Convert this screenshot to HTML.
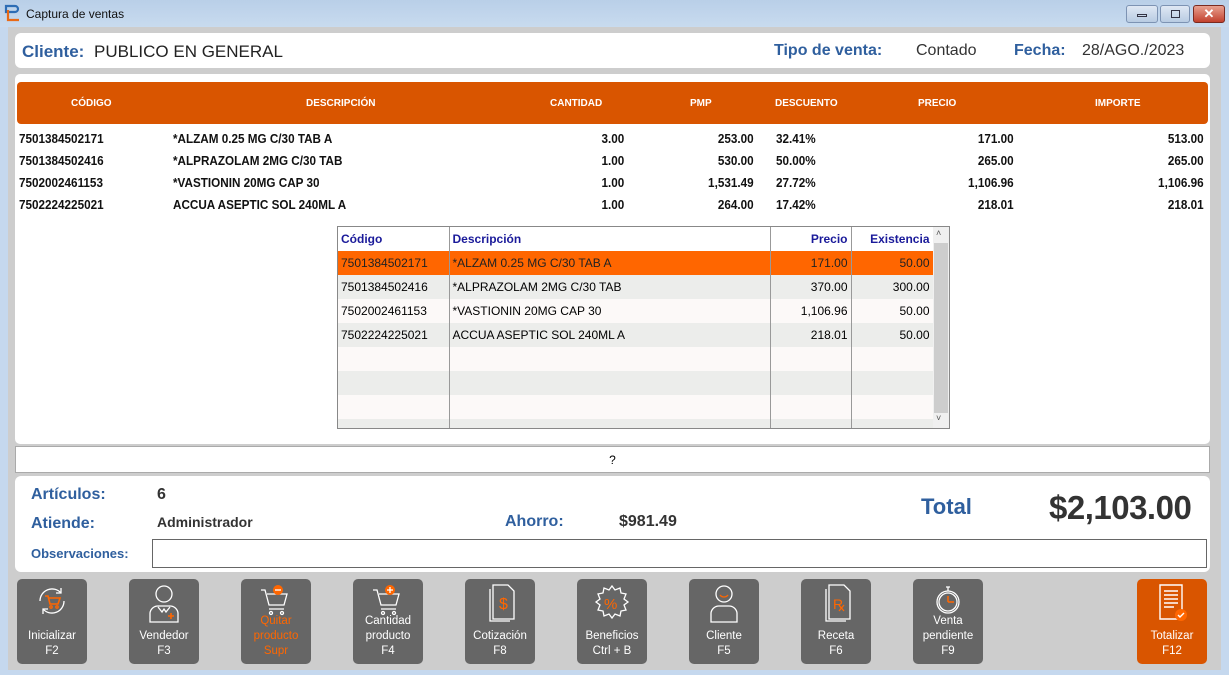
<!DOCTYPE html>
<html><head><meta charset="utf-8"><style>
*{margin:0;padding:0;box-sizing:border-box}
body{width:1229px;height:675px;overflow:hidden;background:#c5d8ee;font-family:"Liberation Sans",sans-serif;position:relative}
.a{position:absolute}
.title{left:0;top:0;width:1229px;height:27px;background:linear-gradient(#b9cfe8,#c8dbef)}
.win{left:8px;top:27px;width:1213px;height:643px;background:#cdcdcd}
.box{background:#fff;border-radius:6px}
.lbl{color:#2f5f9e;font-weight:bold}
.hd{color:#fff;font-weight:bold;font-size:10px;top:98px}
.r{font-weight:bold;font-size:13px;color:#111;transform:scaleX(.9)}
.rt{transform-origin:right}
.lt{transform-origin:left}
.btn{top:579px;width:70px;height:85px;background:#666;border-radius:5px;color:#fff;font-size:11.5px;text-align:center;line-height:15px}
.btn .t{position:absolute;bottom:5px;left:0;width:100%}
.btn svg{position:absolute;left:17px;top:4px}
.pt td{height:24px;font-size:12px;padding:0 3px;border-right:1px solid #999;white-space:nowrap}
</style></head><body>
<div class="a title"></div>
<svg class="a" style="left:4px;top:4px" width="18" height="18" viewBox="0 0 18 18"><path d="M2 2h9a3 3 0 010 6H2z" fill="none" stroke="#2d6db5" stroke-width="2.2"/><path d="M4 6v10h11" fill="none" stroke="#e96a16" stroke-width="2.2"/></svg>
<div class="a" style="left:26px;top:7px;font-size:12px;color:#111">Captura de ventas</div>
<div class="a" style="left:1126px;top:5px;width:32px;height:18px;border:1px solid #7d93b3;border-radius:3px;background:linear-gradient(#dfe8f4,#b8cbe2)"><div class="a" style="left:10px;top:8px;width:10px;height:3px;border:1px solid #334"></div></div>
<div class="a" style="left:1160px;top:5px;width:30px;height:18px;border:1px solid #7d93b3;border-radius:3px;background:linear-gradient(#dfe8f4,#b8cbe2)"><div class="a" style="left:10px;top:4px;width:9px;height:8px;border:1px solid #334"></div></div>
<div class="a" style="left:1193px;top:5px;width:32px;height:18px;border:1px solid #7a2a20;border-radius:3px;background:linear-gradient(#e8a190,#c2412e);color:#fff;font-weight:bold;font-size:13px;text-align:center;line-height:16px">✕</div>
<div class="a win"></div>
<div class="a box" style="left:15px;top:33px;width:1195px;height:35px"></div>
<div class="a lbl" style="left:22px;top:42px;font-size:17px">Cliente:</div>
<div class="a" style="left:94px;top:42px;font-size:17px;color:#222">PUBLICO EN GENERAL</div>
<div class="a lbl" style="left:774px;top:42px;font-size:16px">Tipo de venta:</div>
<div class="a" style="left:916px;top:42px;font-size:16px;color:#333">Contado</div>
<div class="a lbl" style="left:1014px;top:42px;font-size:16px">Fecha:</div>
<div class="a" style="left:1082px;top:42px;font-size:16px;color:#333">28/AGO./2023</div>
<div class="a box" style="left:15px;top:74px;width:1195px;height:370px;border-radius:5px"></div>
<div class="a" style="left:17px;top:82px;width:1191px;height:42px;background:#d95500;border-radius:4px"></div>
<div class="a hd" style="left:71px">CÓDIGO</div>
<div class="a hd" style="left:306px">DESCRIPCIÓN</div>
<div class="a hd" style="left:550px">CANTIDAD</div>
<div class="a hd" style="left:690px">PMP</div>
<div class="a hd" style="left:775px">DESCUENTO</div>
<div class="a hd" style="left:918px">PRECIO</div>
<div class="a hd" style="left:1095px">IMPORTE</div>
<div class="a r lt" style="left:19px;top:128px;line-height:22px">7501384502171<br>7501384502416<br>7502002461153<br>7502224225021</div>
<div class="a r lt" style="left:173px;top:128px;line-height:22px">*ALZAM 0.25 MG C/30 TAB A<br>*ALPRAZOLAM 2MG C/30 TAB<br>*VASTIONIN 20MG CAP 30<br>ACCUA ASEPTIC SOL 240ML A</div>
<div class="a r rt" style="right:605px;top:128px;line-height:22px;text-align:right">3.00<br>1.00<br>1.00<br>1.00</div>
<div class="a r rt" style="right:475px;top:128px;line-height:22px;text-align:right">253.00<br>530.00<br>1,531.49<br>264.00</div>
<div class="a r lt" style="left:776px;top:128px;line-height:22px">32.41%<br>50.00%<br>27.72%<br>17.42%</div>
<div class="a r rt" style="right:215px;top:128px;line-height:22px;text-align:right">171.00<br>265.00<br>1,106.96<br>218.01</div>
<div class="a r rt" style="right:25px;top:128px;line-height:22px;text-align:right">513.00<br>265.00<br>1,106.96<br>218.01</div>
<div class="a" style="left:337px;top:226px;width:613px;height:203px;border:1px solid #888;background:#fcf9f8;overflow:hidden">
<table class="pt" style="border-collapse:collapse;width:595px;table-layout:fixed">
<colgroup><col style="width:111px"><col style="width:321px"><col style="width:81px"><col style="width:82px"></colgroup>
<tr style="background:#fff;color:#1a1a9a;font-weight:bold;font-size:12px"><td>Código</td><td>Descripción</td><td style="text-align:right">Precio</td><td style="text-align:right">Existencia</td></tr>
<tr style="background:#ff6600;color:#222"><td>7501384502171</td><td>*ALZAM 0.25 MG C/30 TAB A</td><td style="text-align:right">171.00</td><td style="text-align:right">50.00</td></tr>
<tr style="background:#ecedeb"><td>7501384502416</td><td>*ALPRAZOLAM 2MG C/30 TAB</td><td style="text-align:right">370.00</td><td style="text-align:right">300.00</td></tr>
<tr><td>7502002461153</td><td>*VASTIONIN 20MG CAP 30</td><td style="text-align:right">1,106.96</td><td style="text-align:right">50.00</td></tr>
<tr style="background:#ecedeb"><td>7502224225021</td><td>ACCUA ASEPTIC SOL 240ML A</td><td style="text-align:right">218.01</td><td style="text-align:right">50.00</td></tr>
<tr><td></td><td></td><td></td><td></td></tr>
<tr style="background:#ecedeb"><td></td><td></td><td></td><td></td></tr>
<tr><td></td><td></td><td></td><td></td></tr>
<tr style="background:#ecedeb"><td></td><td></td><td></td><td></td></tr>
</table>
<div class="a" style="right:0;top:0;width:16px;height:201px;background:#f0f0f0"><div class="a" style="left:1px;top:16px;width:14px;height:170px;background:#cdcdcd"></div><div class="a" style="left:3px;top:1px;font-size:9px;color:#555">˄</div><div class="a" style="left:3px;top:186px;font-size:9px;color:#555">˅</div></div>
</div>
<div class="a" style="left:15px;top:446px;width:1195px;height:27px;background:#fff;border:1px solid #aaa;text-align:center;font-size:12px;line-height:26px">?</div>
<div class="a box" style="left:15px;top:476px;width:1195px;height:96px"></div>
<div class="a lbl" style="left:31px;top:486px;font-size:16px">Artículos:</div>
<div class="a" style="left:157px;top:486px;font-size:16px;font-weight:bold;color:#333">6</div>
<div class="a lbl" style="left:31px;top:515px;font-size:16px">Atiende:</div>
<div class="a" style="left:157px;top:514px;font-size:14px;font-weight:bold;color:#333">Administrador</div>
<div class="a lbl" style="left:505px;top:513px;font-size:16px">Ahorro:</div>
<div class="a" style="left:619px;top:513px;font-size:16px;font-weight:bold;color:#333">$981.49</div>
<div class="a lbl" style="left:921px;top:494px;font-size:22px">Total</div>
<div class="a" style="left:1049px;top:489px;font-size:33px;font-weight:bold;color:#333;letter-spacing:-0.5px">$2,103.00</div>
<div class="a lbl" style="left:31px;top:546px;font-size:13px">Observaciones:</div>
<div class="a" style="left:152px;top:539px;width:1055px;height:29px;border:1px solid #666;background:#fff"></div>

<div class="a btn" style="left:17px"><svg width="36" height="36" viewBox="0 0 36 36" fill="none" stroke="#fff" stroke-width="1.3"><path d="M6 18a12 12 0 0121-8M30 18a12 12 0 01-21 8"/><path d="M27 5v5h-5M9 31v-5h5"/><path d="M11 13h3l2 8h8l2-6H15" stroke="#f60" stroke-width="1.6"/><circle cx="17" cy="24" r="1.2" stroke="#f60"/><circle cx="23" cy="24" r="1.2" stroke="#f60"/></svg><div class="t">Inicializar<br>F2</div></div>
<div class="a btn" style="left:129px"><svg width="36" height="40" viewBox="0 0 36 40" fill="none" stroke="#fff" stroke-width="1.3"><circle cx="18" cy="11" r="8"/><path d="M4 39V30a8 8 0 018-7h12a8 8 0 018 7v9z"/><path d="M12 24l4 5 2-3 2 3 4-5"/><path d="M25 30v6M22 33h6" stroke="#f60" stroke-width="1.6"/></svg><div class="t">Vendedor<br>F3</div></div>
<div class="a btn" style="left:241px;color:#f60"><svg width="36" height="36" viewBox="0 0 36 36" fill="none" stroke="#fff" stroke-width="1.3"><path d="M3 7h4l4 15h15l3-11H9M11 26h15"/><circle cx="13" cy="30" r="1.5"/><circle cx="24" cy="30" r="1.5"/><circle cx="20" cy="7" r="5" fill="#f60" stroke="none"/><path d="M17 7h6"/></svg><div class="t">Quitar<br>producto<br>Supr</div></div>
<div class="a btn" style="left:353px"><svg width="36" height="36" viewBox="0 0 36 36" fill="none" stroke="#fff" stroke-width="1.3"><path d="M3 7h4l4 15h15l3-11H9M11 26h15"/><circle cx="13" cy="30" r="1.5"/><circle cx="24" cy="30" r="1.5"/><circle cx="20" cy="7" r="5" fill="#f60" stroke="none"/><path d="M17 7h6M20 4v6"/></svg><div class="t">Cantidad<br>producto<br>F4</div></div>
<div class="a btn" style="left:465px"><svg width="36" height="40" viewBox="0 0 36 40" fill="none" stroke="#fff" stroke-width="1.3"><path d="M8 6v32h20"/><path d="M11 2h15l6 6v28H11z"/><text x="17" y="26" fill="#f60" stroke="none" font-size="16" font-family="Liberation Sans">$</text></svg><div class="t">Cotización<br>F8</div></div>
<div class="a btn" style="left:577px"><svg width="36" height="40" viewBox="0 0 36 40" fill="none" stroke="#fff" stroke-width="1.3"><path d="M18 3l3 4 5-2 1 5 5 1-2 5 4 3-4 3 2 5-5 1-1 5-5-2-3 4-3-4-5 2-1-5-5-1 2-5-4-3 4-3-2-5 5-1 1-5 5 2z"/><text x="10" y="26" fill="#f60" stroke="none" font-size="15" font-family="Liberation Sans">%</text></svg><div class="t">Beneficios<br>Ctrl + B</div></div>
<div class="a btn" style="left:689px"><svg width="36" height="40" viewBox="0 0 36 40" fill="none" stroke="#fff" stroke-width="1.3"><circle cx="18" cy="11" r="8"/><path d="M14 12a5 5 0 008 0" stroke="#f60"/><path d="M5 39V30a8 8 0 018-7h10a8 8 0 018 7v9z"/></svg><div class="t">Cliente<br>F5</div></div>
<div class="a btn" style="left:801px"><svg width="36" height="40" viewBox="0 0 36 40" fill="none" stroke="#fff" stroke-width="1.3"><path d="M8 6v32h20"/><path d="M11 2h15l6 6v28H11z"/><text x="15" y="26" fill="#f60" stroke="none" font-size="14" font-family="Liberation Sans">R</text><path d="M21 22l5 6M26 22l-5 6" stroke="#f60"/></svg><div class="t">Receta<br>F6</div></div>
<div class="a btn" style="left:913px"><svg width="36" height="36" viewBox="0 0 36 36" fill="none" stroke="#fff" stroke-width="1.3"><circle cx="18" cy="19" r="11"/><circle cx="18" cy="19" r="9"/><path d="M16 4h4M18 4v4"/><path d="M18 19v-6M18 19h6" stroke="#f60" stroke-width="1.5"/></svg><div class="t">Venta<br>pendiente<br>F9</div></div>
<div class="a btn" style="left:1137px;background:#d95500"><svg width="36" height="40" viewBox="0 0 36 40" fill="none" stroke="#fff" stroke-width="1.4"><path d="M6 2h22v34H6z"/><path d="M10 8h14M10 12h14M10 16h14M10 20h14M10 24h10"/><circle cx="27" cy="32" r="6" fill="#f60" stroke="none"/><path d="M24 32l2 2 4-4"/></svg><div class="t">Totalizar<br>F12</div></div>
</body></html>
